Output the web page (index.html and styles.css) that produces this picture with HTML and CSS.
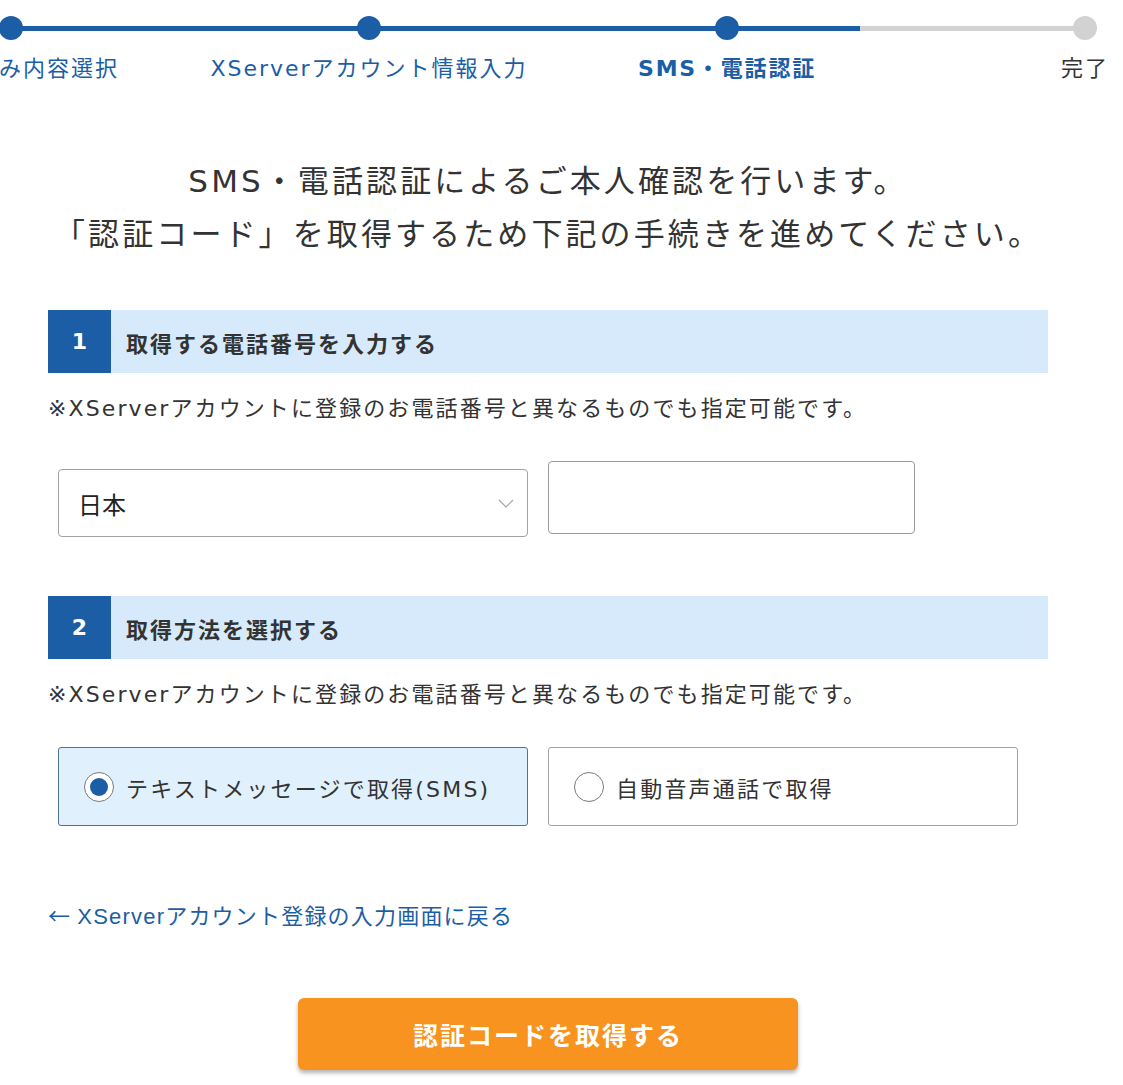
FILE: index.html
```html
<!DOCTYPE html>
<html lang="ja">
<head>
<meta charset="utf-8">
<title>SMS・電話認証</title>
<link rel="stylesheet" href="styles.css">
</head>
<body>
<div class="page">
  <ol class="progress">
    <li class="step done"><span class="dot"></span><span class="label">お申し込み内容選択</span></li>
    <li class="step done"><span class="dot"></span><span class="label">XServerアカウント情報入力</span></li>
    <li class="step current"><span class="dot"></span><span class="label">SMS・電話認証</span></li>
    <li class="step"><span class="dot"></span><span class="label">完了</span></li>
  </ol>

  <main class="content">
    <h1 class="intro">SMS・電話認証によるご本人確認を行います。<br>「認証コード」を取得するため下記の手続きを進めてください。</h1>

    <section class="block">
      <h2 class="block-head"><span class="num">1</span><span class="title">取得する電話番号を入力する</span></h2>
      <p class="note">※XServerアカウントに登録のお電話番号と異なるものでも指定可能です。</p>
      <div class="fields">
        <div class="select">
          <span>日本</span>
          <svg class="chev" width="16" height="9" viewBox="0 0 16 9"><path d="M1 1 L8 8 L15 1" fill="none" stroke="#a8a8a8" stroke-width="1.2"/></svg>
        </div>
        <input class="tel" type="text" aria-label="電話番号">
      </div>
    </section>

    <section class="block block-2">
      <h2 class="block-head"><span class="num">2</span><span class="title">取得方法を選択する</span></h2>
      <p class="note">※XServerアカウントに登録のお電話番号と異なるものでも指定可能です。</p>
      <div class="options">
        <label class="option checked"><span class="radio"><span class="in"></span></span><span class="opt-text">テキストメッセージで取得(SMS)</span></label>
        <label class="option"><span class="radio"></span><span class="opt-text">自動音声通話で取得</span></label>
      </div>
    </section>

    <a class="back" href="#"><span class="arrow">←</span> XServerアカウント登録の入力画面に戻る</a>

    <div class="actions">
      <button class="submit" type="button">認証コードを取得する</button>
    </div>
  </main>
</div>
</body>
</html>
```

FILE: styles.css
```css
html, body {
  margin: 0;
  padding: 0;
  background: #fff;
}
body {
  font-family: "DejaVu Sans", "Noto Sans CJK JP", sans-serif;
  color: #333;
}
.page {
  width: 1123px;
  overflow: hidden;
  min-height: 1085px;
}

/* progress */
.progress {
  list-style: none;
  margin: 0 0 0 -168px;
  padding: 16px 0 0;
  width: 1432px;
  display: grid;
  grid-template-columns: repeat(4, 358px);
  background:
    linear-gradient(#1b5ea6, #1b5ea6) 179px 26px / 849px 5px no-repeat,
    linear-gradient(#d2d2d2, #d2d2d2) 1028px 26px / 225px 5px no-repeat;
}
.step {
  display: flex;
  flex-direction: column;
  align-items: center;
}
.dot {
  width: 24px;
  height: 24px;
  border-radius: 50%;
  background: #d2d2d2;
}
.step.done .dot, .step.current .dot { background: #1b5ea6; }
.label {
  margin-top: 14px;
  line-height: 30px;
  font-size: 22px;
  letter-spacing: 2px;
  white-space: nowrap;
  color: #333;
}
.step.done .label { color: #1b5ea6; }
.step.current .label { color: #1b5ea6; font-weight: bold; letter-spacing: 1.8px; }

/* content */
.content {
  margin-left: 48px;
  width: 1000px;
}
.intro {
  margin: 71px 0 0;
  text-align: center;
  font-weight: normal;
  font-size: 31px;
  line-height: 53px;
  letter-spacing: 3.1px;
  color: #333;
}
.block { margin-top: 49px; }
.block-2 { margin-top: 59px; }
.block-head {
  margin: 0;
  display: flex;
  height: 63px;
  background: #d7eafb;
  align-items: center;
  font-size: 22px;
  letter-spacing: 2px;
  font-weight: bold;
  color: #333;
}
.num {
  width: 63px;
  height: 63px;
  background: #1b5ea6;
  color: #fff;
  display: flex;
  align-items: center;
  justify-content: center;
  font-size: 22px;
  letter-spacing: 0;
}
.title { padding-left: 15px; }
.note {
  margin: 21px 0 0;
  line-height: 30px;
  font-size: 22px;
  letter-spacing: 2.1px;
  color: #333;
}
.fields {
  display: flex;
  gap: 20px;
  align-items: flex-start;
  padding-left: 10px;
  margin-top: 37px;
}
.select {
  margin-top: 8px;
  box-sizing: border-box;
  width: 470px;
  height: 68px;
  border: 1px solid #a3a3a3;
  border-radius: 4px;
  display: flex;
  align-items: center;
  justify-content: space-between;
  padding: 0 13px 0 19px;
  font-size: 24px;
  color: #222;
}
.tel {
  box-sizing: border-box;
  width: 367px;
  height: 73px;
  border: 1px solid #999;
  border-radius: 4px;
  margin: 0;
  font-size: 24px;
  padding: 0 16px;
  background: #fff;
}
.options {
  display: flex;
  gap: 20px;
  padding-left: 10px;
  margin-top: 37px;
}
.option {
  box-sizing: border-box;
  width: 470px;
  height: 79px;
  border: 1px solid #a3a3a3;
  border-radius: 3px;
  display: flex;
  align-items: center;
  padding-left: 25px;
  background: #fff;
}
.option.checked {
  background: #e1f0fd;
  border-color: #4f7398;
}
.radio {
  box-sizing: border-box;
  width: 30px;
  height: 30px;
  border: 1px solid #7a7a7a;
  border-radius: 50%;
  background: #fff;
  display: flex;
  align-items: center;
  justify-content: center;
  flex: none;
}
.radio .in {
  width: 18px;
  height: 18px;
  border-radius: 50%;
  background: #1b5ea6;
}
.opt-text {
  margin-left: 12px;
  font-size: 22px;
  letter-spacing: 2.2px;
  color: #333;
}
.back {
  display: flex;
  align-items: center;
  height: 30px;
  margin-top: 73px;
  font-family: "Liberation Sans", "Noto Sans CJK JP", sans-serif;
  font-size: 22px;
  letter-spacing: 1.2px;
  color: #1b5ea6;
  text-decoration: none;
  white-space: pre;
}
.arrow {
  font-family: "Noto Sans CJK JP", sans-serif;
  letter-spacing: 0;
}
.actions {
  display: flex;
  justify-content: center;
  margin-top: 69px;
}
.submit {
  width: 500px;
  height: 72px;
  border: none;
  border-radius: 6px;
  background: #f7931e;
  color: #fff;
  font-family: "Noto Sans CJK JP", sans-serif;
  font-weight: bold;
  font-size: 25px;
  letter-spacing: 2px;
  box-shadow: 0 3px 4px rgba(0, 0, 0, 0.3);
}
```
